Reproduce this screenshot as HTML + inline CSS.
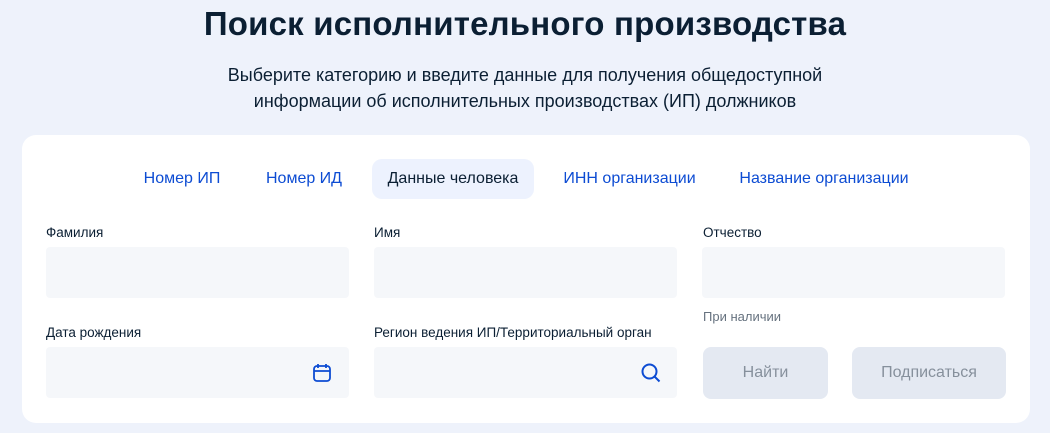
<!DOCTYPE html>
<html><head><meta charset="utf-8"><style>
*{margin:0;padding:0;box-sizing:border-box}
body{width:1050px;height:433px;background:#eef2fb;font-family:"Liberation Sans",sans-serif;position:relative;overflow:hidden;color:#0b1f33}
.abs{position:absolute}
h1{position:absolute;top:5px;left:0;width:1050px;text-align:center;font-size:33px;font-weight:bold;color:#0b1f33;letter-spacing:0.2px}
.sub{position:absolute;top:62px;left:0;width:1050px;text-align:center;font-size:18px;line-height:26px;color:#0b1f33}
.card{position:absolute;left:22px;top:135px;width:1008px;height:288px;background:#fff;border-radius:14px}
.tab{position:absolute;top:159px;height:40px;line-height:40px;font-size:16px;color:#0d4cd3;text-align:center}
.act{background:#edf2fe;border-radius:10px;color:#0b1f33}
.lbl{position:absolute;font-size:13.5px;color:#0b1f33}
.inp{position:absolute;width:303px;height:51px;background:#f5f7fa;border-radius:4px}
.btn{position:absolute;top:347px;height:52px;background:#e4e9f2;border-radius:8px;color:#86909c;font-size:16px;line-height:52px;text-align:center}
</style></head><body>
<h1>Поиск исполнительного производства</h1>
<div class="sub">Выберите категорию и введите данные для получения общедоступной<br>информации об исполнительных производствах (ИП) должников</div>
<div class="card"></div>
<div class="tab" style="left:131px;width:102px">Номер ИП</div>
<div class="tab" style="left:254px;width:100px">Номер ИД</div>
<div class="tab act" style="left:372px;width:162px">Данные человека</div>
<div class="tab" style="left:552px;width:155px">ИНН организации</div>
<div class="tab" style="left:728px;width:192px">Название организации</div>
<div class="lbl" style="left:46px;top:225px">Фамилия</div>
<div class="lbl" style="left:374px;top:225px">Имя</div>
<div class="lbl" style="left:703px;top:225px">Отчество</div>
<div class="inp" style="left:46px;top:247px"></div>
<div class="inp" style="left:374px;top:247px"></div>
<div class="inp" style="left:702px;top:247px"></div>
<div class="lbl" style="left:703px;top:309px;color:#66727f;font-size:13px">При наличии</div>
<div class="lbl" style="left:46px;top:325px">Дата рождения</div>
<div class="lbl" style="left:374px;top:325px">Регион ведения ИП/Территориальный орган</div>
<div class="inp" style="left:46px;top:347px"></div>
<div class="inp" style="left:374px;top:347px"></div>
<svg class="abs" style="left:312px;top:362px" width="20" height="22" viewBox="0 0 20 22" fill="none" stroke="#0d4cd3" stroke-width="1.8"><rect x="2" y="4" width="16" height="15" rx="3"/><path d="M2 9h16M6 2v4M14 2v4"/></svg>
<svg class="abs" style="left:640px;top:362px" width="22" height="22" viewBox="0 0 22 22" fill="none" stroke="#0d4cd3" stroke-width="2"><circle cx="9.5" cy="9.5" r="7"/><path d="M14.5 14.5l5 5"/></svg>
<div class="btn" style="left:703px;width:125px">Найти</div>
<div class="btn" style="left:852px;width:154px">Подписаться</div>
</body></html>
